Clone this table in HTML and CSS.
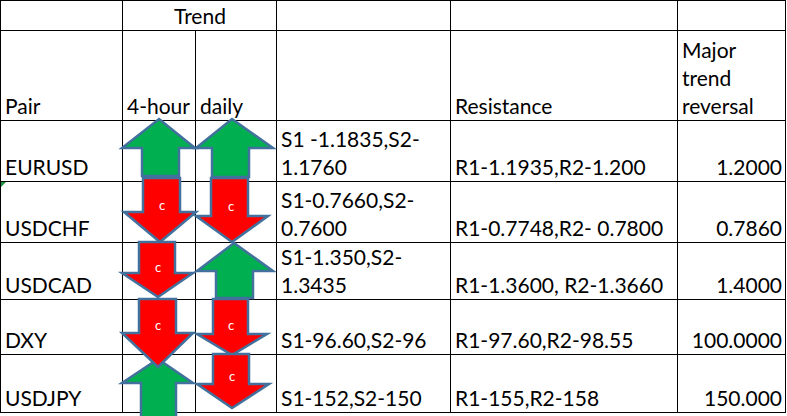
FILE: index.html
```html
<!DOCTYPE html>
<html>
<head>
<meta charset="utf-8">
<link rel="stylesheet" href="styles.css">
</head>
<body>
<div class="sheet">
  <table class="grid">
    <colgroup>
      <col class="c-pair"><col class="c-h4"><col class="c-day"><col class="c-sup"><col class="c-res"><col class="c-maj">
    </colgroup>
    <tr class="r-top">
      <td></td><td colspan="2" class="center">Trend</td><td></td><td></td><td></td>
    </tr>
    <tr class="r-head">
      <td>Pair</td><td>4-hour</td><td>daily</td><td></td><td>Resistance</td><td class="wrap">Major trend reversal</td>
    </tr>
    <tr class="r1">
      <td>EURUSD</td><td></td><td></td><td class="wrap">S1 -1.1835,S2-1.1760</td><td>R1-1.1935,R2-1.200</td><td class="num">1.2000</td>
    </tr>
    <tr class="r2">
      <td class="flag">USDCHF</td><td></td><td></td><td class="wrap">S1-0.7660,S2-0.7600</td><td>R1-0.7748,R2- 0.7800</td><td class="num">0.7860</td>
    </tr>
    <tr class="r3">
      <td>USDCAD</td><td></td><td></td><td class="wrap">S1-1.350,S2-1.3435</td><td>R1-1.3600, R2-1.3660</td><td class="num">1.4000</td>
    </tr>
    <tr class="r4">
      <td>DXY</td><td></td><td></td><td>S1-96.60,S2-96</td><td>R1-97.60,R2-98.55</td><td class="num">100.0000</td>
    </tr>
    <tr class="r5">
      <td>USDJPY</td><td></td><td></td><td>S1-152,S2-150</td><td>R1-155,R2-158</td><td class="num">150.000</td>
    </tr>
  </table>
  <svg class="arrows" width="787" height="416" viewBox="0 0 787 416">
    <g class="up">
      <polygon points="159,119 195,148 179,148 179,176 142,176 142,148 122,148"/>
      <polygon points="232,119 273,148 249,148 249,177 212,177 212,148 196,148"/>
      <polygon points="234,243 273,271 253,271 253,298 216,298 216,271 197,271"/>
      <polygon points="158,359 193,383 176,383 176,430 141,430 141,383 122,383"/>
    </g>
    <g class="down">
      <polygon points="143,178 180,178 180,212 196,212 160,242 124,212 143,212"/>
      <polygon points="211,178 248,178 248,216 268,216 232,242 196,216 211,216"/>
      <polygon points="139,242 175,242 175,273 193,273 158,297 122,273 139,273"/>
      <polygon points="139,299 176,299 176,333 193,333 158,367 122,333 139,333"/>
      <polygon points="213,299 248,299 248,334 267,334 232,355 197,334 213,334"/>
      <polygon points="213,354 249,354 249,384 269,384 232,408 197,384 213,384"/>
    </g>
    <g class="lbl">
      <text x="162" y="210">c</text>
      <text x="231" y="211">c</text>
      <text x="158" y="272">c</text>
      <text x="158" y="330">c</text>
      <text x="231" y="330">c</text>
      <text x="232" y="381">c</text>
    </g>
  </svg>
</div>
</body>
</html>
```

FILE: styles.css
```css
html, body {
  margin: 0;
  padding: 0;
  background: #ffffff;
}
body {
  width: 787px;
  height: 416px;
  overflow: hidden;
}
.sheet {
  position: relative;
  width: 787px;
  height: 416px;
}
.grid {
  border-collapse: collapse;
  table-layout: fixed;
  width: 785px;
  font-family: Lato, "Liberation Sans", sans-serif;
  font-size: 21px;
  line-height: 28px;
  color: #000;
}
.c-pair { width: 122px; }
.c-h4 { width: 73px; }
.c-day { width: 81px; }
.c-sup { width: 174px; }
.c-res { width: 227px; }
.c-maj { width: 108px; }
.grid td {
  border: 1px solid #000;
  padding: 0 3px 0 4px;
  vertical-align: bottom;
  white-space: nowrap;
  overflow: hidden;
}
.grid td.wrap {
  white-space: normal;
}
.grid td.center {
  text-align: center;
}
.grid td.num {
  text-align: right;
  padding-right: 3px;
}
.grid td.flag {
  position: relative;
}
.grid td.flag::before {
  content: "";
  position: absolute;
  left: 0;
  top: 0;
  border-top: 5px solid #1e8f3a;
  border-right: 5px solid transparent;
}
.r-top { height: 30px; }
.r-head { height: 90px; }
.r1 { height: 61px; }
.r2 { height: 61px; }
.r3 { height: 57px; }
.r4 { height: 55px; }
.r5 { height: 58px; }
.arrows {
  position: absolute;
  left: 0;
  top: 0;
  pointer-events: none;
}
.arrows polygon {
  stroke: #41719c;
  stroke-width: 2.5;
  stroke-linejoin: miter;
}
.up polygon { fill: #00b050; }
.down polygon { fill: #ff0000; }
.lbl text {
  fill: #ffffff;
  font-family: Lato, "Liberation Sans", sans-serif;
  font-size: 13px;
  text-anchor: middle;
}
```
